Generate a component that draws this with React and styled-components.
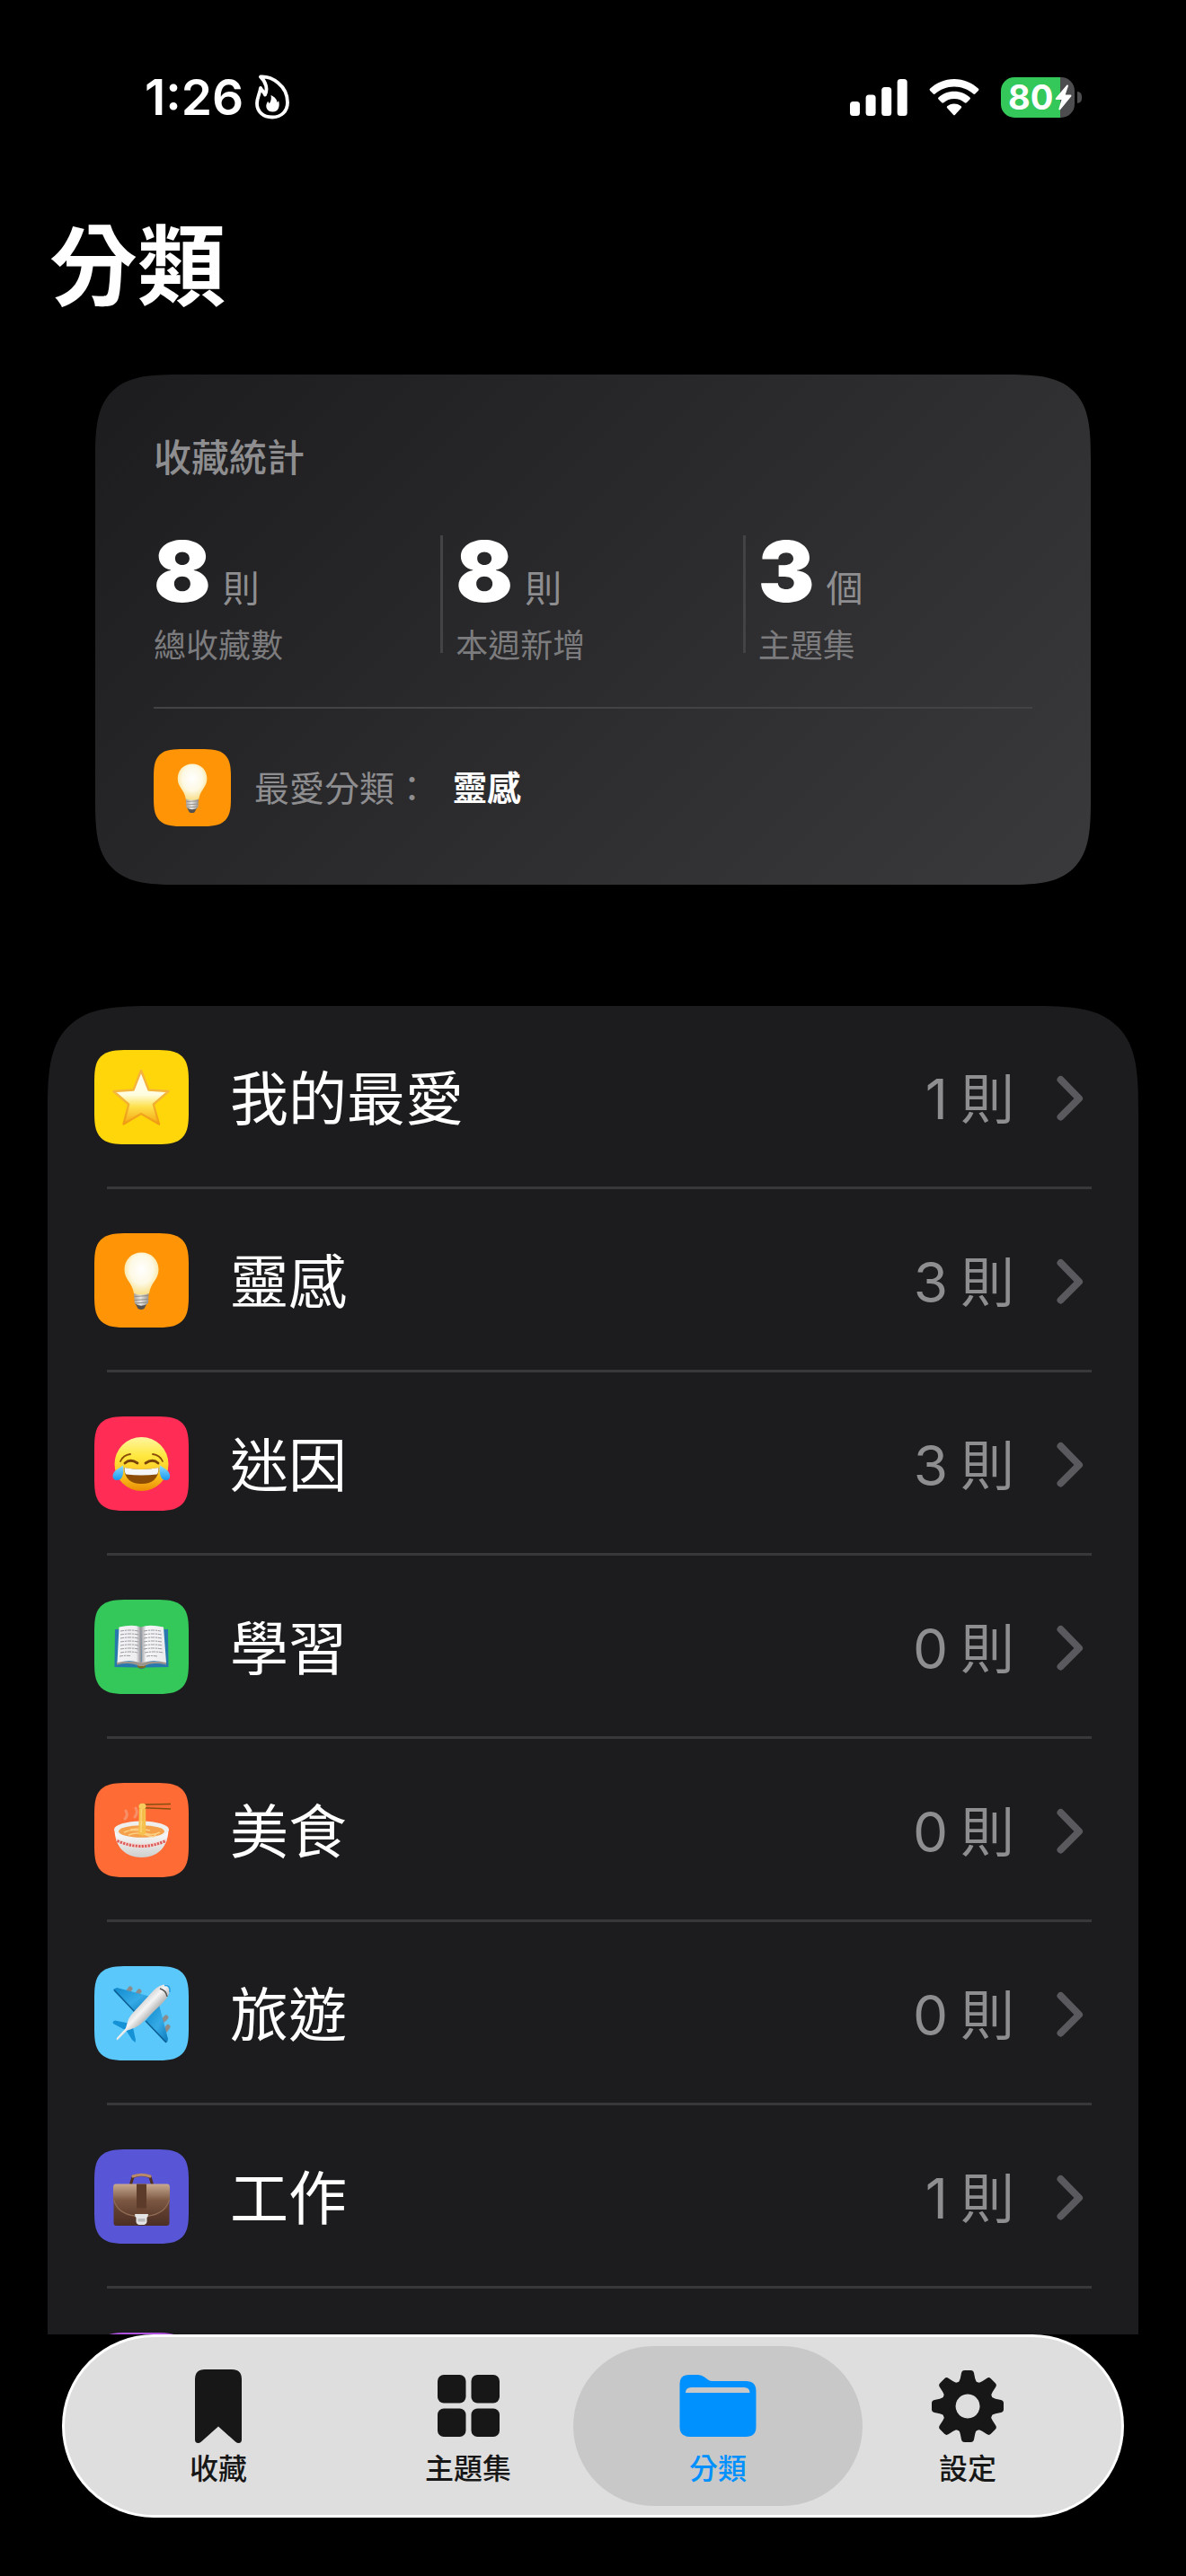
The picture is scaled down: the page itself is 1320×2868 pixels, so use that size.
import React from "react";
import styled, { createGlobalStyle } from "styled-components";

const CJK = `"Noto Sans CJK TC", "Noto Sans CJK SC", sans-serif`;
const LATIN = `Inter, "Noto Sans CJK TC", sans-serif`;

const GlobalStyle = createGlobalStyle`
  *, *::before, *::after { box-sizing: border-box; }
  body { margin: 0; background: #000; color: #fff; font-family: ${CJK}; }
  h1, h2, p, ul, dl, dd, dt { margin: 0; padding: 0; }
`;

/* ---------- page ---------- */

const Screen = styled.div`
  display: flex;
  flex-direction: column;
  height: 100vh;
  overflow: hidden;
  background: #000;
`;

const Content = styled.main`
  flex: 1;
  min-height: 0;
  overflow: hidden;
  padding: 0 53px;
`;

const PageTitle = styled.h1`
  margin-bottom: 55px;
  padding-left: 2px;
  font-size: 98px;
  font-weight: 700;
  line-height: 146px;
`;

/* ---------- status bar ---------- */

const StatusBar = styled.header`
  display: flex;
  justify-content: space-between;
  align-items: center;
  height: 216px;
  padding: 0 116px 0 161px;
`;

const StatusGroup = styled.div`
  display: flex;
  align-items: center;
  gap: ${(p) => p.$gap}px;
`;

const Clock = styled.time`
  font-family: ${LATIN};
  font-size: 55px;
  font-weight: 600;
  line-height: 60px;
`;

const Battery = styled.div`
  display: flex;
  align-items: center;
  gap: 3px;
`;

const BatteryBody = styled.div`
  display: flex;
  align-items: center;
  gap: 2px;
  width: 82px;
  height: 45px;
  padding-left: 8px;
  border-radius: 15px;
  background: linear-gradient(to right, #34c759 80%, #4d4d4f 80%);
  font-family: ${LATIN};
  font-size: 38px;
  font-weight: 700;
  line-height: 45px;
`;

const BatteryCap = styled.div`
  width: 5px;
  height: 13px;
  border-radius: 0 5px 5px 0;
  background: #4d4d4f;
`;

/* ---------- statistics card ---------- */

const Card = styled.section`
  margin: 0 53px 135px;
  padding: 65px;
  border-radius: 66px;
  background: linear-gradient(135deg, #1c1c1e, #3a3a3c);

  @supports (corner-shape: superellipse(1.7)) {
    border-radius: 98px;
    corner-shape: superellipse(1.7);
  }
`;

const CardTitle = styled.h2`
  margin-bottom: 56px;
  color: #8e8e90;
  font-size: 42px;
  font-weight: 500;
  line-height: 50px;
`;

const Stats = styled.dl`
  display: flex;
  gap: 14px;
  padding-bottom: 51px;
  border-bottom: 2px solid #434345;
`;

const StatDivider = styled.div`
  width: 3px;
  height: 131px;
  margin-top: 8px;
  background: #434345;
`;

const Stat = styled.div`
  display: flex;
  flex: 1;
  flex-direction: column-reverse;
  gap: 12px;
`;

const StatValue = styled.dd`
  display: flex;
  align-items: baseline;
  gap: 13px;
  height: 96px;
`;

const StatNumber = styled.strong`
  font-family: ${LATIN};
  font-size: 94px;
  font-weight: 900;
  line-height: 96px;
`;

const StatUnit = styled.span`
  color: #8e8e90;
  font-size: 41px;
  line-height: 50px;
`;

const StatLabel = styled.dt`
  color: #7c7c7e;
  font-size: 36px;
  line-height: 40px;
`;

const Favorite = styled.div`
  display: flex;
  align-items: center;
  gap: 26px;
  margin-top: 45px;
  line-height: 50px;
`;

const FavoriteLabel = styled.span`
  padding-bottom: 4px;
  color: #8e8e90;
  font-size: 39px;
`;

const FavoriteName = styled.strong`
  padding-bottom: 4px;
  font-size: 38px;
  font-weight: 700;
`;

/* ---------- category list ---------- */

const Tile = styled.span`
  display: flex;
  flex: none;
  align-items: center;
  justify-content: center;
  width: ${(p) => p.$size}px;
  height: ${(p) => p.$size}px;
  border-radius: 26px;
  background: ${(p) => p.$color};

  @supports (corner-shape: superellipse(1.7)) {
    border-radius: ${(p) => (p.$size > 90 ? 38 : 34)}px;
    corner-shape: superellipse(1.7);
  }
`;

const List = styled.ul`
  list-style: none;
  padding: 0 52px;
  border-radius: 78px;
  background: #1c1c1e;

  @supports (corner-shape: superellipse(1.7)) {
    border-radius: 120px;
    corner-shape: superellipse(1.7);
  }
`;

const Row = styled.button`
  display: flex;
  align-items: center;
  width: 100%;
  padding: 49px 0 47px;
  border: 0;
  background: none;
  color: #fff;
  font-family: ${LATIN};
  text-align: left;
`;

const RowDivider = styled.div`
  height: 3px;
  margin-left: 14px;
  background: #38383a;
`;

const RowName = styled.span`
  flex: 1;
  margin-left: 46px;
  padding-bottom: 6px;
  font-family: ${CJK};
  font-size: 65px;
  line-height: 80px;
`;

const RowCount = styled.span`
  display: flex;
  align-items: baseline;
  gap: 14px;
  margin-right: 46px;
  color: #8e8e90;
  font-size: 62px;
  line-height: 80px;
`;

const RowUnit = styled.span`
  font-family: ${CJK};
  font-size: 60px;
`;

/* ---------- tab bar ---------- */

const TabBar = styled.nav`
  display: flex;
  height: 204px;
  margin: 0 69px 65px;
  padding: 0 32px;
  border: 3px solid #fff;
  border-radius: 102px;
  background: #dedede;
`;

const Tab = styled.button`
  position: relative;
  isolation: isolate;
  display: flex;
  flex: 1;
  flex-direction: column;
  align-items: center;
  padding: 35px 0 0;
  border: 0;
  background: none;
  color: ${(p) => (p.$active ? "#0091ff" : "#171717")};
  font-family: ${CJK};
  font-size: 32px;
  font-weight: 500;
  line-height: 44px;

  &::before {
    content: "";
    position: absolute;
    z-index: -1;
    inset: 10px -22px;
    border-radius: 90px;
    background: ${(p) => (p.$active ? "#c8c8c8" : "transparent")};
  }

  svg { display: block; margin-bottom: 3px; }
`;

/* ---------- status drawings ---------- */

const Flame = () => (
  <svg width="40" height="50" viewBox="0 0 40 50" fill="none" aria-hidden="true">
    <path
      d="M7 2.500 C19 1.500 37 12 37 31 C37 41 30 47.500 20 47.500 C9.500 47.500 3 41 3 32 C3 26 6 21.500 7 15 C8.500 17.500 11 20 12 22.500 C15 17 13.500 8.500 7 2.500 Z"
      stroke="#fff" strokeWidth="3.800" strokeLinejoin="round"
    />
    <path
      d="M18.500 23 C23 25 25.500 28 25.500 31 C26.500 30.500 26.800 29.800 27 29 C29 35 27 41.500 20.500 41.500 C15.500 41.500 13 38 13.300 34.500 C13.500 32.500 14.500 31.500 15 29.800 C15.700 30.600 16.300 31.300 16.700 32.300 C18.500 30 19.300 27 18.500 23 Z"
      fill="#fff"
    />
  </svg>
);

const Signal = () => (
  <svg width="64" height="41" viewBox="0 0 64 41" fill="#fff" aria-hidden="true">
    <rect x="0" y="25" width="11" height="16" rx="3.500" />
    <rect x="17.600" y="17.500" width="11" height="23.500" rx="3.500" />
    <rect x="35.200" y="9" width="11" height="32" rx="3.500" />
    <rect x="52.700" y="0" width="11" height="41" rx="3.500" />
  </svg>
);

const Wifi = () => (
  <svg width="56" height="41" viewBox="0 0 56 41" fill="#fff" aria-hidden="true">
    <path d="M28 0 C38.500 0 48 4.200 55 10.800 Q56 11.800 55 12.800 L51.300 16.600 Q50.300 17.400 49.300 16.500 C43.700 11.400 36.200 8.400 28 8.400 C19.800 8.400 12.300 11.400 6.700 16.500 Q5.700 17.400 4.700 16.600 L1 12.800 Q0 11.800 1 10.800 C8 4.200 17.500 0 28 0 Z" />
    <path d="M28 13.800 C34.800 13.800 41 16.400 45.500 20.500 Q46.500 21.500 45.500 22.500 L41.800 26.200 Q40.700 27.100 39.600 26.200 C36.500 23.500 32.500 22 28 22 C23.500 22 19.500 23.500 16.400 26.200 Q15.300 27.100 14.200 26.200 L10.500 22.500 Q9.500 21.500 10.500 20.500 C15 16.400 21.200 13.800 28 13.800 Z" />
    <path d="M28 27.500 C31.200 27.500 33.800 28.600 35.800 30.300 Q36.800 31.300 35.800 32.300 L29 39.800 Q28 40.800 27 39.800 L20.200 32.300 Q19.200 31.300 20.200 30.300 C22.200 28.600 24.800 27.500 28 27.500 Z" />
  </svg>
);

const Bolt = () => (
  <svg width="19" height="29" viewBox="0 0 19 29" fill="#fff" aria-hidden="true">
    <path d="M13.500 0.500 L1 15.300 Q0 17 1.700 17 L7.500 17 L4.300 27.500 Q5 29 6.200 28 L18.300 13.200 Q19 11.500 17.500 11.500 L11.700 11.500 L15 1.500 Q14.700 0 13.500 0.500 Z" />
  </svg>
);

const Chevron = () => (
  <svg width="40" height="56" viewBox="0 0 40 56" fill="none" aria-hidden="true">
    <path d="M5.500 8 L26 29 L5.500 49.500" stroke="#5a5a5e" strokeWidth="8" strokeLinecap="round" strokeLinejoin="round" />
  </svg>
);

/* ---------- category drawings, all on a 64 unit square ---------- */

const Star = () => (
  <>
    <defs>
      <linearGradient id="starFill" x1="0" y1="0" x2="0" y2="1">
        <stop offset="0" stopColor="#fffdf0" />
        <stop offset="0.45" stopColor="#fffde0" />
        <stop offset="0.68" stopColor="#fde04a" />
        <stop offset="1" stopColor="#f5a50f" />
      </linearGradient>
      <linearGradient id="starEdge" x1="0" y1="0" x2="0" y2="1">
        <stop offset="0" stopColor="#f7b13c" />
        <stop offset="0.5" stopColor="#f3b63a" />
        <stop offset="1" stopColor="#f09c12" />
      </linearGradient>
    </defs>
    <path
      d="M32 2 L40.500 23.500 L62.500 25 L45.800 39.500 L52 61.500 L32 50 L12.500 61.500 L18.200 39.500 L1.500 25 L23.500 23.500 Z"
      fill="url(#starFill)" stroke="url(#starEdge)" strokeWidth="2.400" strokeLinejoin="round"
    />
  </>
);

const Bulb = () => (
  <>
    <defs>
      <radialGradient id="glass" cx="0.5" cy="0.4" r="0.62">
        <stop offset="0" stopColor="#ffffff" />
        <stop offset="0.55" stopColor="#fdf9e4" />
        <stop offset="1" stopColor="#f8dd83" />
      </radialGradient>
      <linearGradient id="screw" x1="0" y1="0" x2="1" y2="0">
        <stop offset="0" stopColor="#a9a29a" />
        <stop offset="0.45" stopColor="#e8e6e2" />
        <stop offset="1" stopColor="#9a958f" />
      </linearGradient>
    </defs>
    <path d="M25.500 57 L38.500 57 L35.500 63 Q32 65 28.500 63 Z" fill="#55524f" />
    <path d="M24 45 L40.500 45 L40 57 Q32 62.500 24.800 57 Z" fill="url(#screw)" />
    <path d="M24.500 49.500 L40.200 48.500 M24.700 53.500 L40 52.500 M25 57 L39.500 56" stroke="#918c86" strokeWidth="1" />
    <path d="M32.500 0.500 C43.500 0.500 51.500 8.500 51.500 19.500 C51.500 31 42.500 34 41 46 Q32.500 49 24 46 C22.500 34 13.500 31 13.500 19.500 C13.500 8.500 21.500 0.500 32.500 0.500 Z" fill="url(#glass)" />
  </>
);

const Joy = () => (
  <>
    <defs>
      <linearGradient id="face" x1="0" y1="0" x2="0" y2="1">
        <stop offset="0" stopColor="#fff5a0" />
        <stop offset="0.35" stopColor="#fee83f" />
        <stop offset="0.7" stopColor="#fdc520" />
        <stop offset="1" stopColor="#e98d05" />
      </linearGradient>
      <linearGradient id="tear" x1="0" y1="0" x2="0" y2="1">
        <stop offset="0" stopColor="#8fdcff" />
        <stop offset="1" stopColor="#1698f0" />
      </linearGradient>
    </defs>
    <circle cx="32.500" cy="32" r="30" fill="url(#face)" />
    <path d="M9 29 Q12 22 20 21 M56 29 Q53 22 45 21" stroke="#8a4b08" strokeWidth="1.800" fill="none" strokeLinecap="round" />
    <path d="M14 31 Q20 25.500 28 31 M37 31 Q45 25.500 51 31" stroke="#7a4208" strokeWidth="2.800" fill="none" strokeLinecap="round" />
    <path d="M13 36 Q32.500 40 52 36 Q51 54 32.500 54 Q14 54 13 36 Z" fill="#8c4c06" />
    <path d="M13.500 36 Q32.500 40 51.500 36 Q51.500 42 49.500 43.500 Q32.500 45.500 15.500 43.500 Q13.500 42 13.500 36 Z" fill="#f4f6f8" />
    <path d="M12 33.500 C13 41 12 50 5.500 50 C-1.500 50 -0.500 42 4.500 38.500 Q9 35.500 12 33.500 Z" fill="url(#tear)" />
    <path d="M53 33.500 C52 41 53 50 59.500 50 C66 50 65 42 60.500 38.500 Q56 35.500 53 33.500 Z" fill="url(#tear)" />
  </>
);

const Book = () => (
  <>
    <defs>
      <linearGradient id="pageLeft" x1="0" y1="0" x2="1" y2="0">
        <stop offset="0" stopColor="#f3f2f4" />
        <stop offset="0.8" stopColor="#eeedf0" />
        <stop offset="1" stopColor="#8f8f93" />
      </linearGradient>
      <linearGradient id="pageRight" x1="0" y1="0" x2="1" y2="0">
        <stop offset="0" stopColor="#9a9a9e" />
        <stop offset="0.2" stopColor="#f6f5f7" />
        <stop offset="1" stopColor="#ecebee" />
      </linearGradient>
    </defs>
    <path d="M3 12 L62 12 L62.500 54 L37 54.500 Q32.500 58 28 54.500 L2.500 54 Z" fill="#2878ad" />
    <path d="M28 51 h9 v3 q-4.500 3 -9 0 Z" fill="#806b22" />
    <path d="M5 48 L5 51.500 Q20 48 30 53 L35 53 Q45 48 60 51.500 L60 48 Z" fill="#9c958d" />
    <path d="M7.500 9.500 Q23 6 32 9.500 L32 50 Q22 45 5.500 49 Z" fill="url(#pageLeft)" />
    <path d="M32 9.500 Q41 6 57 9.500 L60 49 Q43 45 32.500 50 Z" fill="url(#pageRight)" />
    <g stroke="#9a9a9f" strokeWidth="1" strokeDasharray="4 0.8 2.500 0.700" fill="none">
      <path d="M9 14 Q20 12 29 14 M9 18 Q20 16 29 18 M9 22 Q20 20 29 22 M9 26 Q20 24 29 26 M9 30 Q20 28 29 30 M9 34 Q20 32 29 34 M9 38 Q20 36 28 38 M8 42 Q14 41 20 41.500" />
      <path d="M35 14 Q45 12 54 14 M35 18 Q45 16 55 18 M35 22 Q45 20 55 22 M35 26 Q45 24 55 26 M35 30 Q45 28 56 30 M35 34 Q45 32 56 34 M36 38 Q46 36 57 38 M38 42 Q44 41 50 42" />
    </g>
  </>
);

const Noodles = () => (
  <>
    <defs>
      <linearGradient id="bowl" x1="0" y1="0" x2="0" y2="1">
        <stop offset="0" stopColor="#ffffff" />
        <stop offset="1" stopColor="#cfcfce" />
      </linearGradient>
    </defs>
    <path d="M14 19 Q18 15 15 10 M25 17 Q29 12 26 7" stroke="#f2a98a" strokeWidth="3" fill="none" strokeLinecap="round" opacity="0.600" />
    <path d="M2.500 31 C3 51 15 62 32.500 62 C50 62 62 51 62.500 31 Z" fill="url(#bowl)" />
    <ellipse cx="32.500" cy="31" rx="30.500" ry="9.500" fill="#efefee" />
    <ellipse cx="32.500" cy="33" rx="25.500" ry="6.800" fill="#f5a04b" />
    <path d="M13 34 Q24 29 34 34 T53 34 M18 37 Q28 33 38 37 T48 36 M20 31 Q30 29 42 32" stroke="#fbd083" strokeWidth="1.500" fill="none" />
    <path d="M4 41 Q32.500 53 61 41 L60 45 Q32.500 58 5 45 Z" fill="#f3d3cf" />
    <path d="M5.500 43.500 Q32.500 55.500 59.500 43.500" stroke="#dc5a58" strokeWidth="3" strokeDasharray="2.200 1.300" fill="none" />
    <path d="M31 5 L30.500 36 M33.500 5 L33.500 37 M36 6 L36 35" stroke="#f5c04c" strokeWidth="2.400" strokeLinecap="round" />
    <path d="M32.300 6 L32 34" stroke="#fde08c" strokeWidth="1" />
    <path d="M30 3.200 L65 2.600 M30 6.600 L65 8" stroke="#85500f" strokeWidth="1.500" />
    <ellipse cx="33.500" cy="5" rx="4" ry="3.200" fill="#f7cb5e" />
  </>
);

const Plane = () => (
  <>
    <defs>
      <linearGradient id="wing" x1="0" y1="0" x2="1" y2="1">
        <stop offset="0" stopColor="#1089cb" />
        <stop offset="0.55" stopColor="#35aae6" />
        <stop offset="1" stopColor="#0c79ba" />
      </linearGradient>
      <linearGradient id="hull" x1="0.3" y1="0.3" x2="0.7" y2="0.7">
        <stop offset="0" stopColor="#b5b5b5" />
        <stop offset="0.45" stopColor="#f5f5f5" />
        <stop offset="1" stopColor="#7d7d7d" />
      </linearGradient>
    </defs>
    <g stroke="#8c8c8c" strokeWidth="5" strokeLinecap="round">
      <path d="M20 4 L17.500 7.500 M30 7 L27 11 M60 36 L57 39 M62 46.500 L59.500 50" />
    </g>
    <path d="M1 5 L5 3 L43 13 L25 30 L3 8 Z" fill="url(#wing)" />
    <path d="M61 64 L57 62 L37 40 L52 22 L62 60 Z" fill="url(#wing)" />
    <path d="M2 5.500 L25 30 M60 64 L37 40" stroke="#0b5f94" strokeWidth="1.600" fill="none" />
    <path d="M0.500 41 L3 39.500 L20 43 L14 50 L1 43 Z M25.500 64 L22 61 L15 50 L22 43 L26 61 Z" fill="#1592d6" />
    <path d="M62.500 1 C66 5 63 13 56 20 L31 44 C26 48 20 49 16 51 L6 61 Q4 62 5 59 L15 48 C17 42 17 38 22 32 L46 6 C52 0 59 -2 62.500 1 Z" fill="url(#hull)" />
    <path d="M53 4 Q60 6 61 13" stroke="#555" strokeWidth="1.600" fill="none" />
    <path d="M58 0.500 Q65 0 64 8" stroke="#2ba4e4" strokeWidth="1.800" fill="none" />
  </>
);

const Briefcase = () => (
  <>
    <defs>
      <linearGradient id="flap" x1="0" y1="0" x2="0" y2="1">
        <stop offset="0" stopColor="#c8aa90" />
        <stop offset="0.5" stopColor="#7c5843" />
        <stop offset="1" stopColor="#5e3d2e" />
      </linearGradient>
      <linearGradient id="leather" x1="0" y1="0" x2="0" y2="1">
        <stop offset="0" stopColor="#7b543f" />
        <stop offset="1" stopColor="#4c2f24" />
      </linearGradient>
    </defs>
    <path d="M20.500 18 L23 9.500 Q32.500 5.500 42 9.500 L44.500 18" stroke="#4f2f22" strokeWidth="3" fill="none" />
    <path d="M23 9 Q32.500 5.500 42 9" stroke="#b98a6c" strokeWidth="3.200" strokeLinecap="round" fill="none" />
    <path d="M1.500 22 h62 v39 q0 3 -3 3 h-56 q-3 0 -3 -3 Z" fill="url(#leather)" />
    <path d="M4 17.500 h57 q3 0 3 4 v13 C61 48 49 54 32.500 54 C16 54 4 48 1 34.500 v-13 q0 -4 3 -4 Z" fill="url(#flap)" />
    <path d="M1.500 35 C5 48 16 53.500 32.500 53.500 C49 53.500 60 48 63.500 35" stroke="#8e6a54" strokeWidth="1.200" fill="none" />
    <path d="M27 17.500 h11 v27 h-11 Z" fill="#5c3b2b" />
    <path d="M25 52 Q26 45 32.500 44.500 Q39 45 40 52 Z" fill="#6b4432" />
    <path d="M25 51 h15 l-0.500 3 l-1 1 v5 q-1 3 -3 3 h-6 q-2 0 -3 -3 v-5 l-1 -1 Z" fill="#e4e4e4" />
    <path d="M28.500 56 h8 v3.500 h-8 Z" fill="#bcbcbc" />
  </>
);

const Emoji = styled.svg.attrs({ viewBox: "1 0 64 64", "aria-hidden": true })`
  width: ${(p) => p.$size}px;
  height: ${(p) => p.$size}px;
  overflow: visible;
`;

/* ---------- tab drawings ---------- */

const TabIcon = ({ children }) => (
  <svg width="88" height="84" viewBox="0 0 88 84" fill="currentColor" aria-hidden="true">
    {children}
  </svg>
);

const BookmarkShape = () => (
  <path d="M18 12 Q18 1 29 1 L59 1 Q70 1 70 12 L70 79 Q70 83 66.500 83 Q65 83 63 81.500 L44 64.500 L25 81.500 Q23 83 21.500 83 Q18 83 18 79 Z" />
);

const GridShape = () => (
  <>
    <rect x="10" y="7" width="31.500" height="31.500" rx="7" />
    <rect x="47.500" y="7" width="31.500" height="31.500" rx="7" />
    <rect x="10" y="44.500" width="31.500" height="31.500" rx="7" />
    <rect x="47.500" y="44.500" width="31.500" height="31.500" rx="7" />
  </>
);

const FolderShape = () => (
  <path
    fillRule="evenodd"
    d="M1.500 17 Q1.500 7 12 7 L22 7 Q26 7 29 9.500 L33 12.500 Q35 14 38 14 L75 14 Q86.500 14 86.500 25 L86.500 65 Q86.500 76 75 76 L13 76 Q1.500 76 1.500 65 Z M8 27 L79.500 27 Q79.500 21 73 21 L14.500 21 Q8 21 8 27 Z"
  />
);

const toothAngles = [0, 45, 90, 135, 180, 225, 270, 315];

const GearShape = () => (
  <>
    <path fillRule="evenodd" d="M44 13 A29 29 0 1 1 43.900 13 Z M44 28.500 A13.500 13.500 0 1 0 44.100 28.500 Z" />
    {toothAngles.map((a) => (
      <path
        key={a}
        transform={`rotate(${a} 44 42)`}
        d="M32 17 Q35 15 35.800 11 L37 5 Q37.600 2 40.500 2 L47.500 2 Q50.400 2 51 5 L52.200 11 Q53 15 56 17 Z"
      />
    ))}
  </>
);

/* ---------- data ---------- */

const stats = [
  { value: "8", unit: "則", label: "總收藏數" },
  { value: "8", unit: "則", label: "本週新增" },
  { value: "3", unit: "個", label: "主題集" },
];

const categories = [
  { name: "我的最愛", count: 1, color: "#ffd60a", Art: Star },
  { name: "靈感", count: 3, color: "#ff9506", Art: Bulb },
  { name: "迷因", count: 3, color: "#ff2d55", Art: Joy },
  { name: "學習", count: 0, color: "#34c759", Art: Book },
  { name: "美食", count: 0, color: "#ff6b35", Art: Noodles },
  { name: "旅遊", count: 0, color: "#5ac8fa", Art: Plane },
  { name: "工作", count: 1, color: "#5856d6", Art: Briefcase },
];

const tabs = [
  { name: "收藏", Shape: BookmarkShape },
  { name: "主題集", Shape: GridShape },
  { name: "分類", Shape: FolderShape, active: true },
  { name: "設定", Shape: GearShape },
];

export default function App() {
  return (
    <>
      <GlobalStyle />
      <Screen>
        <StatusBar>
          <StatusGroup $gap={12}>
            <Clock>1:26</Clock>
            <Flame />
          </StatusGroup>
          <StatusGroup $gap={24}>
            <Signal />
            <Wifi />
            <Battery>
              <BatteryBody>
                <span>80</span>
                <Bolt />
              </BatteryBody>
              <BatteryCap />
            </Battery>
          </StatusGroup>
        </StatusBar>

        <Content>
          <PageTitle>分類</PageTitle>

          <Card>
            <CardTitle>收藏統計</CardTitle>
            <Stats>
              {stats.map((s, i) => (
                <React.Fragment key={s.label}>
                  {i > 0 && <StatDivider />}
                  <Stat>
                    <StatLabel>{s.label}</StatLabel>
                    <StatValue>
                      <StatNumber>{s.value}</StatNumber>
                      <StatUnit>{s.unit}</StatUnit>
                    </StatValue>
                  </Stat>
                </React.Fragment>
              ))}
            </Stats>
            <Favorite>
              <Tile $size={86} $color="#ff9506">
                <Emoji $size={55}><Bulb /></Emoji>
              </Tile>
              <FavoriteLabel>最愛分類：</FavoriteLabel>
              <FavoriteName>靈感</FavoriteName>
            </Favorite>
          </Card>

          <List>
            {categories.map(({ name, count, color, Art }) => (
              <li key={name}>
                <Row type="button">
                  <Tile $size={105} $color={color}>
                    <Emoji $size={64}><Art /></Emoji>
                  </Tile>
                  <RowName>{name}</RowName>
                  <RowCount>
                    {count}
                    <RowUnit>則</RowUnit>
                  </RowCount>
                  <Chevron />
                </Row>
                <RowDivider />
              </li>
            ))}
            <li>
              <Row as="div">
                <Tile $size={105} $color="#af52de" />
              </Row>
            </li>
          </List>
        </Content>

        <TabBar>
          {tabs.map(({ name, Shape, active }) => (
            <Tab key={name} type="button" $active={active} aria-current={active ? "page" : undefined}>
              <TabIcon><Shape /></TabIcon>
              {name}
            </Tab>
          ))}
        </TabBar>
      </Screen>
    </>
  );
}
